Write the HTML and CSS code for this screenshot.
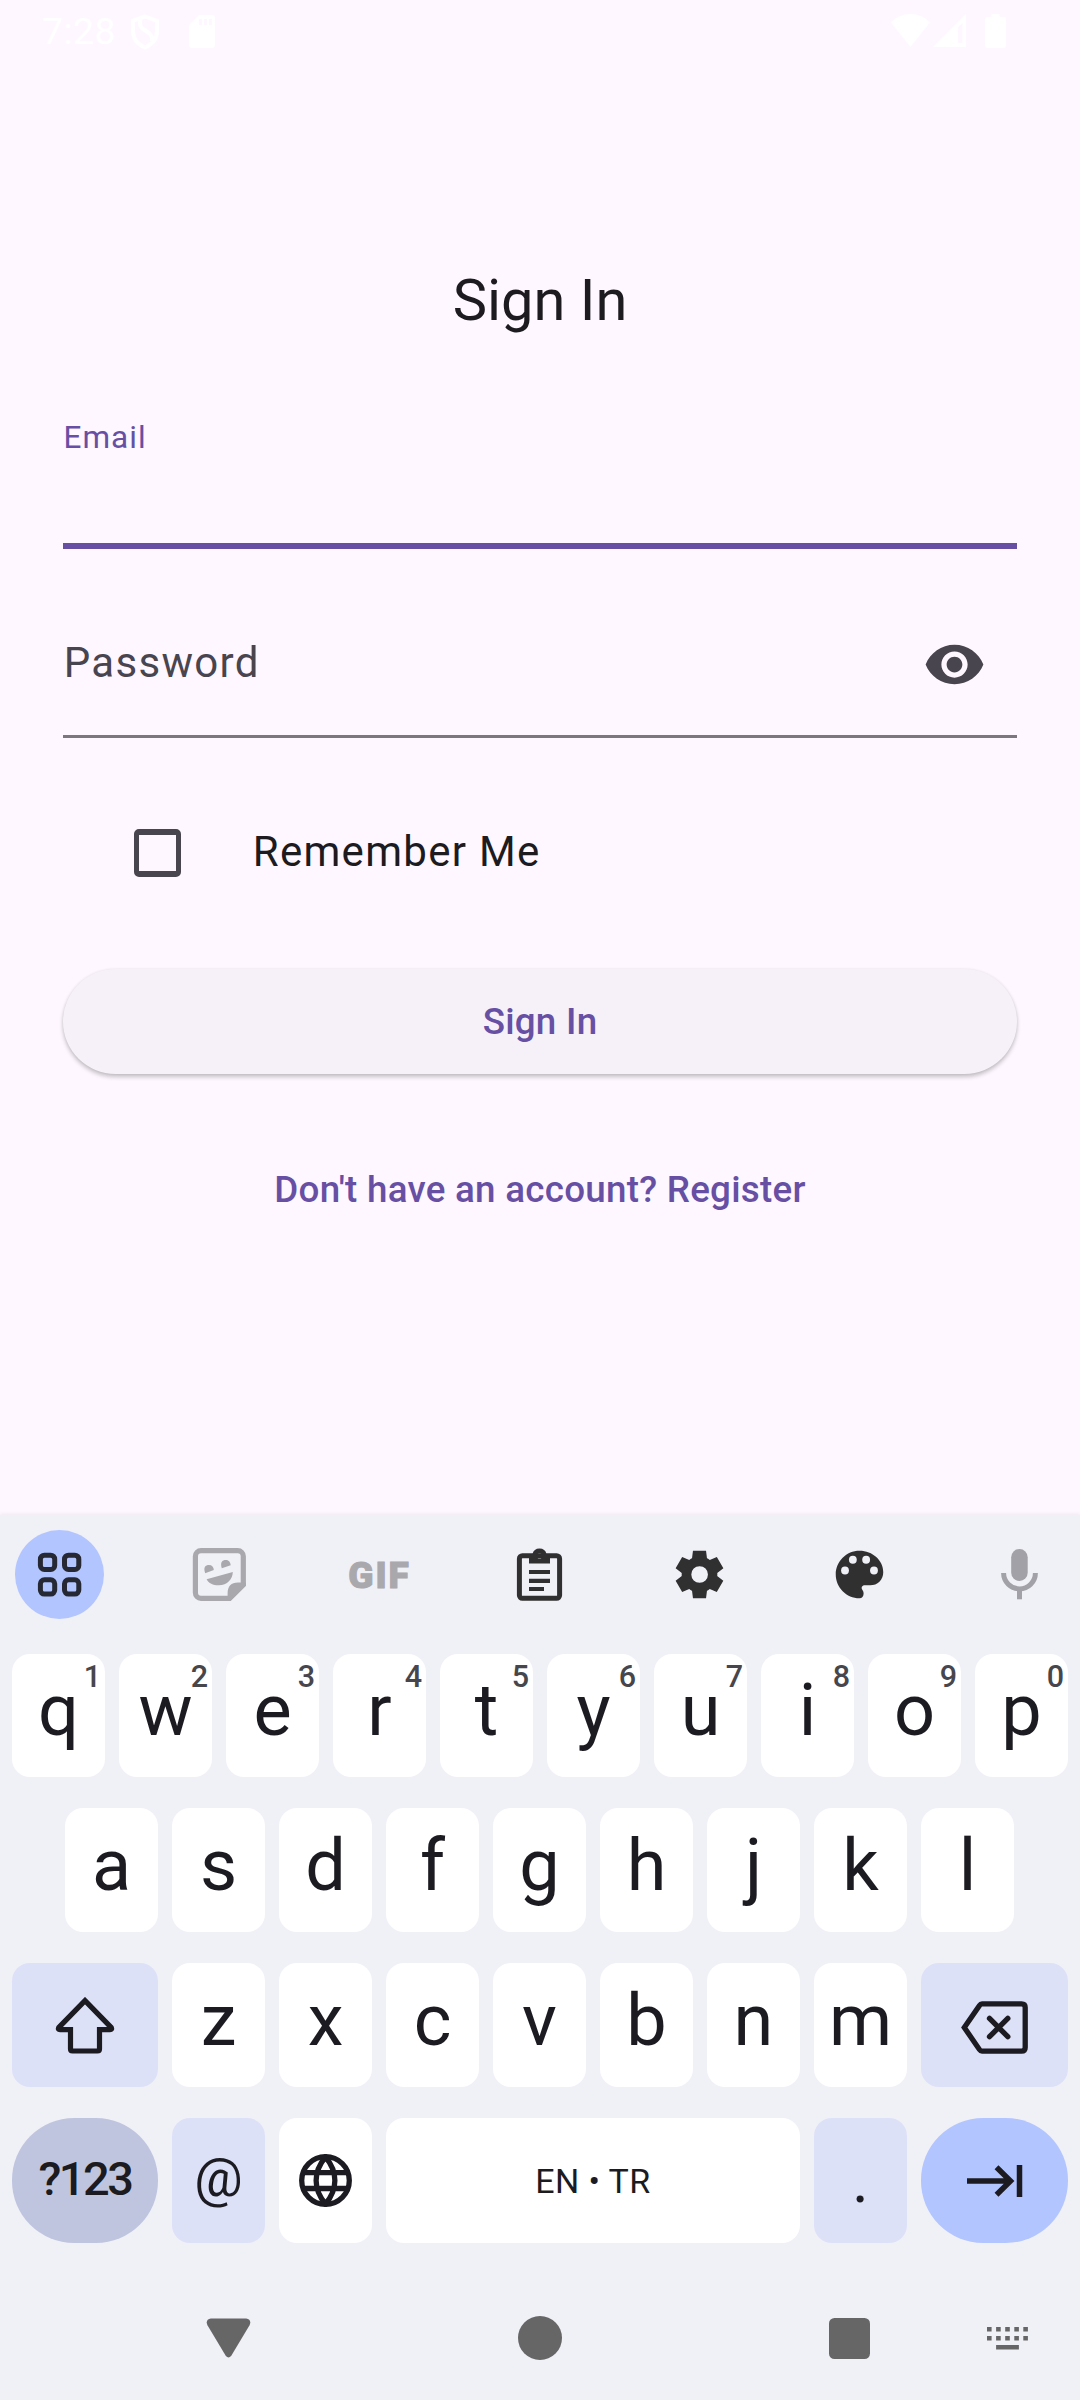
FILE: index.html
```html
<!DOCTYPE html>
<html lang="en">
<head>
<meta charset="utf-8">
<title>Sign In</title>
<link rel="stylesheet" href="styles.css">
</head>
<body>
<div class="screen">
  <header class="status">
    <span class="clock">7:28</span>
    <svg class="shield" width="30" height="36" viewBox="0 0 30 36"><path d="M15 2.500 27 7v10c0 8-5 13.500-12 16.500C8 30.500 3 25 3 17V7z"/><path d="M10 5v5c0 7 12 7 12 14v3"/></svg>
    <svg class="sd" width="26" height="33" viewBox="0 0 26 33"><path fill-rule="evenodd" d="M10 0h13a3 3 0 0 1 3 3v27a3 3 0 0 1-3 3H3a3 3 0 0 1-3-3V10zM10 4v6h3V4zM15 4v6h3V4zM20 4v6h3V4z"/></svg>
    <span class="spacer"></span>
    <svg class="wifi" width="39" height="33" viewBox="0 0 39 33"><path d="M0 8.500Q8 0 19.500 0T39 8.500L19.500 33z"/></svg>
    <svg class="signal" width="33" height="33" viewBox="0 0 33 33"><path fill-rule="evenodd" d="M33 0v33H0zM29.500 9 25 13.500V29h4.500z"/></svg>
    <svg class="battery" width="21" height="34" viewBox="0 0 21 34"><path d="M6.500 0h8v3H19a2 2 0 0 1 2 2v27a2 2 0 0 1-2 2H2a2 2 0 0 1-2-2V5a2 2 0 0 1 2-2h4.500z"/></svg>
  </header>

  <main class="form">
    <h1 class="title">Sign In</h1>
    <div class="field field-active"><label class="label-small">Email</label></div>
    <div class="field field-idle">
      <label class="label">Password</label>
      <svg class="eye" width="63" height="63" viewBox="0 0 24 24"><path d="M12 4.500C7 4.500 2.730 7.610 1 12c1.730 4.390 6 7.500 11 7.500s9.270-3.110 11-7.500c-1.730-4.390-6-7.500-11-7.500zM12 17c-2.760 0-5-2.240-5-5s2.240-5 5-5 5 2.240 5 5-2.240 5-5 5zm0-8c-1.660 0-3 1.340-3 3s1.340 3 3 3 3-1.340 3-3-1.340-3-3-3z"/></svg>
    </div>
    <div class="remember"><span class="checkbox"></span><span class="remember-text">Remember Me</span></div>
    <div class="button">Sign In</div>
    <div class="link">Don't have an account? Register</div>
  </main>

  <section class="keyboard">
    <div class="toolbar">
      <div class="tool tool-on"><svg width="89" height="89" viewBox="0 0 89 89" fill="none" stroke="#262833" stroke-width="5"><rect x="25.400" y="25.200" width="14.300" height="14.300" rx="4"/><rect x="49.500" y="25.200" width="14.300" height="14.300" rx="4"/><rect x="25.400" y="49.800" width="14.300" height="14.300" rx="4"/><rect x="49.500" y="49.800" width="14.300" height="14.300" rx="4"/></svg></div>
      <div class="tool"><svg width="89" height="89" viewBox="0 0 89 89" fill="#a9a8ad"><path fill="none" stroke="#a9a8ad" stroke-width="5.200" d="M54.500 68.400H26a5.600 5.600 0 0 1-5.600-5.600V26.200a5.600 5.600 0 0 1 5.600-5.600h36.700a5.600 5.600 0 0 1 5.600 5.600v28.500z"/><path d="M52.600 69V63.500Q52.600 52.600 63 52.600h7.900v3.100L55.500 71h-3z"/><path d="M30.200 43.200C28 37 30.500 35 34 35c3 0 4.800 2 4.800 5.100zM46.800 38.300C45 32.500 47 30 51 30c3 0 4.500 2.500 4.700 5.300zM31.600 49.300 57.800 42c0 7-5.500 13.300-14 13.300-6 0-10-2-12.200-6z"/></svg></div>
      <div class="tool gif">GIF</div>
      <div class="tool"><svg width="89" height="89" viewBox="0 0 89 89" fill="#303030"><rect x="24.400" y="25.700" width="40.200" height="42.600" rx="3" fill="none" stroke="#303030" stroke-width="5"/><path fill-rule="evenodd" d="M34 33.500V24h3.500a7.200 7.200 0 0 1 14 0H55v9.500zM44.500 23.300a2.600 2.600 0 1 0 .01 5.200 2.600 2.600 0 0 0 0-5.200z"/><path d="M34 40h21v4H34zM34 48.700h21V53H34zM34 57h15v4H34z"/></svg></div>
      <div class="tool"><svg width="57" height="57" viewBox="0 0 24 24" fill="#303030"><path d="M9.250 22l-.4-3.200q-.325-.125-.612-.3-.288-.175-.563-.375L4.700 19.375l-2.750-4.750 2.575-1.950Q4.500 12.500 4.500 12.337v-.675q0-.162.025-.337L1.950 9.375l2.750-4.750 2.975 1.250q.275-.2.575-.375.3-.175.6-.3l.4-3.200h5.500l.4 3.200q.325.125.613.3.287.175.562.375l2.975-1.250 2.750 4.750-2.575 1.950q.025.175.025.337v.675q0 .163-.05.338l2.575 1.950-2.750 4.750-2.950-1.250q-.275.2-.575.375-.3.175-.6.3l-.4 3.200zm2.800-6.500q1.450 0 2.475-1.025Q15.550 13.450 15.550 12q0-1.450-1.025-2.475Q13.500 8.500 12.050 8.500q-1.475 0-2.488 1.025Q8.550 10.550 8.550 12q0 1.450 1.012 2.475Q10.575 15.500 12.050 15.500z"/></svg></div>
      <div class="tool"><svg width="57" height="57" viewBox="0 0 24 24"><path fill="#303030" d="M12 22C6.490 22 2 17.510 2 12S6.490 2 12 2s10 4.040 10 9c0 3.310-2.450 5.500-5.500 5.500h-2.270c-1.200 0-1.700 1-1 2 .3.400.5.800.5 1.600 0 1.100-.7 1.900-1.730 1.900z"/><g fill="#f0f0f7"><circle cx="5.900" cy="10.300" r="1.650"/><circle cx="9.200" cy="5.800" r="1.650"/><circle cx="14.800" cy="5.800" r="1.650"/><circle cx="18.100" cy="10.300" r="1.650"/></g></svg></div>
      <div class="tool"><svg width="89" height="89" viewBox="0 0 89 89" fill="#a1a1a7"><rect x="36.200" y="19" width="16.500" height="32" rx="8.200"/><path fill="none" stroke="#a1a1a7" stroke-width="5" d="M28.600 43a15.900 15.900 0 0 0 31.800 0"/><path d="M42 60h5v9.300h-5z"/></svg></div>
    </div>

    <div class="keys">
      <div class="row row-top">
        <div class="key">q<sup class="hint">1</sup></div><div class="key">w<sup class="hint">2</sup></div><div class="key">e<sup class="hint">3</sup></div><div class="key">r<sup class="hint">4</sup></div><div class="key">t<sup class="hint">5</sup></div><div class="key">y<sup class="hint">6</sup></div><div class="key">u<sup class="hint">7</sup></div><div class="key">i<sup class="hint">8</sup></div><div class="key">o<sup class="hint">9</sup></div><div class="key">p<sup class="hint">0</sup></div>
      </div>
      <div class="row row-home">
        <div class="key">a</div><div class="key">s</div><div class="key">d</div><div class="key">f</div><div class="key">g</div><div class="key">h</div><div class="key">j</div><div class="key">k</div><div class="key">l</div>
      </div>
      <div class="row">
        <div class="key key-wide tint shift"><svg width="60" height="57" viewBox="0 0 60 57" fill="none" stroke="#1b1b21" stroke-width="5.200"><path d="M30 3.600 56.300 30.600Q57.300 32.700 55 32.700H44.500V52q0 2-2 2h-25q-2 0-2-2V32.700H5Q2.700 32.700 3.700 30.600z"/></svg></div>
        <div class="key">z</div><div class="key">x</div><div class="key">c</div><div class="key">v</div><div class="key">b</div><div class="key">n</div><div class="key">m</div>
        <div class="key key-wide tint erase"><svg width="67" height="53" viewBox="0 0 67 53" fill="none" stroke="#1b1b21" stroke-width="5.300"><path d="M21 2.900h39.500q3.700 0 3.700 3.700v39.800q0 3.700-3.700 3.700H21q-1.500 0-2.500-1.500L3.300 26.500 18.500 4.400Q19.500 2.900 21 2.900z"/><path stroke-linecap="round" d="M28.500 17.400 46.800 35.700M46.800 17.400 28.500 35.700"/></svg></div>
      </div>
      <div class="row row-bottom">
        <div class="key key-wide symbols">?123</div>
        <div class="key tint at">@</div>
        <div class="key icon-key"><svg width="53" height="53" viewBox="0 0 53 53" fill="none" stroke="#1b1b21" stroke-width="5.300"><circle cx="26.500" cy="26.500" r="23.800"/><path d="M4 18.700h45M4 34.500h45M26.500 3C14 18 14 35 26.500 50 39 35 39 18 26.500 3z"/></svg></div>
        <div class="key space">EN • TR</div>
        <div class="key tint dot">.</div>
        <div class="key key-wide enter"><svg width="56" height="32" viewBox="0 0 56 32" fill="none" stroke="#1b1b21" stroke-width="5.500"><path d="M0 16h44M29.500 2.200 43.500 16 29.500 29.800M52.500 0v32"/></svg></div>
      </div>
    </div>

    <nav class="nav">
      <svg width="45" height="42" viewBox="0 0 46 42"><path d="M5 1h36q6 1 3.500 7L26 39q-3 4-6 0L1.500 8Q-1 2 5 1z"/></svg>
      <svg width="44" height="44" viewBox="0 0 44 44"><circle cx="22" cy="22" r="22"/></svg>
      <svg width="41" height="41" viewBox="0 0 41 41"><rect width="41" height="41" rx="5.500"/></svg>
      <svg class="ime" width="41" height="23" viewBox="0 0 41 23"><path d="M0 0h4.600v4.600H0zM9.100 0h4.600v4.600H9.100zM18.200 0h4.600v4.600h-4.600zM27.300 0h4.600v4.600h-4.600zM36.300 0h4.600v4.600h-4.600zM0 9h4.600v4.600H0zM9.100 9h4.600v4.600H9.100zM18.200 9h4.600v4.600h-4.600zM27.300 9h4.600v4.600h-4.600zM36.300 9h4.600v4.600h-4.600zM9.100 18h22.800v4.600H9.100z"/></svg>
    </nav>
  </section>
</div>
</body>
</html>
```
FILE: styles.css
```css
* { box-sizing: border-box; }
body { margin: 0; font-family: Roboto, sans-serif; }
svg { display: block; flex: none; }

.screen {
  display: flex;
  flex-direction: column;
  width: 1080px;
  height: 2400px;
  background: #fef7ff;
  color: #1d1b20;
}

/* Status bar */
.status {
  display: flex;
  align-items: flex-start;
  height: 63px;
  padding: 14px 74px 0 42px;
  color: #fff;
  fill: #fff;
}
.clock { width: 88px; font-size: 37.500px; line-height: 34px; letter-spacing: .4px; }
.shield { fill: none; stroke: #fff; stroke-width: 4; }
.sd { margin: 1px 0 0 29px; }
.spacer { flex: 1; }
.signal { margin-left: 3px; }
.battery { margin-left: 19px; }

/* Form */
.form {
  display: flex;
  flex-direction: column;
  height: 1452px;
  padding: 200px 63px 0;
}
.title {
  margin: 0;
  font-size: 57.75px;
  font-weight: 400;
  line-height: 74px;
  text-align: center;
}
.field { display: flex; }
.field-active {
  height: 133px;
  margin-top: 79px;
  padding: 1px 0 0 .6px;
  border-bottom: 6px solid #6750a4;
}
.label-small {
  color: #6750a4;
  font-size: 31.5px;
  line-height: 42px;
  letter-spacing: 1px;
}
.field-idle {
  align-items: center;
  justify-content: space-between;
  height: 147px;
  margin-top: 42px;
  padding: 0 31px 0 .7px;
  border-bottom: 3px solid #7c767f;
}
.label {
  color: #49454f;
  font-size: 42px;
  line-height: 50px;
  letter-spacing: 1.3125px;
}
.eye { margin-top: 2px; fill: #49454f; }
.remember {
  display: flex;
  align-items: center;
  height: 126px;
  margin-top: 52px;
  padding-left: 71px;
}
.checkbox {
  width: 47px;
  height: 48px;
  border: 6px solid #49454f;
  border-width: 6px 5px;
  border-radius: 5px;
}
.remember-text {
  margin: -2px 0 0 71.7px;
  font-size: 42px;
  line-height: 50px;
  letter-spacing: 1.3125px;
}
.button {
  height: 105px;
  margin-top: 53px;
  border-radius: 53px;
  background: #f6f1f9;
  box-shadow: 0 3px 4px rgba(0, 0, 0, .22), 0 0 3px rgba(0, 0, 0, .07);
  color: #6750a4;
  font-size: 36.75px;
  font-weight: 500;
  line-height: 105px;
  letter-spacing: .2625px;
  text-align: center;
}
.link {
  margin-top: 91px;
  color: #6750a4;
  font-size: 36.75px;
  font-weight: 500;
  line-height: 50px;
  letter-spacing: .2625px;
  text-align: center;
}

/* Keyboard */
.keyboard {
  display: flex;
  flex-direction: column;
  height: 885px;
  background: #f0f0f7;
  box-shadow: 0 -1px 3px rgba(80, 60, 90, .08);
}
.toolbar {
  display: flex;
  justify-content: space-between;
  height: 139px;
  padding: 15px 16px 0 15px;
}
.tool {
  display: flex;
  align-items: center;
  justify-content: center;
  width: 89px;
  height: 89px;
}
.tool-on { border-radius: 50%; background: #b2c5ff; }
.gif {
  padding-top: 2px;
  color: #a9a8ad;
  font-size: 37px;
  font-weight: 900;
  letter-spacing: 2px;
  -webkit-text-stroke: 1px #a9a8ad;
}
.keys {
  display: flex;
  flex-direction: column;
  gap: 31px;
  padding: 0 12px;
}
.row { display: flex; gap: 14px; height: 124px; }
.row-top { height: 123px; }
.row-home { padding-left: 53px; }
.row-bottom { height: 125px; }
.key {
  position: relative;
  display: flex;
  align-items: center;
  justify-content: center;
  width: 93px;
  padding-bottom: 9px;
  border-radius: 18px;
  background: #fff;
  color: #1b1b21;
  font-size: 72px;
  line-height: 84px;
}
.hint {
  position: absolute;
  top: 5px;
  right: 4px;
  color: #46464c;
  font-size: 30.500px;
  font-weight: 500;
  line-height: 36px;
  vertical-align: baseline;
}
.key-wide { width: 146px; }
.key-wide:last-child { width: 147px; }
.tint { background: #dde1f8; }
.shift, .erase, .icon-key, .enter { padding-bottom: 0; }
.erase { padding-top: 5px; }
.symbols {
  padding-bottom: 3px;
  border-radius: 62px;
  background: #c0c5df;
  font-size: 47px;
  font-weight: 500;
  letter-spacing: -2.500px;
}
.at { padding-bottom: 5px; font-size: 54px; }
.space { width: 414px; padding-bottom: 0; font-size: 34px; letter-spacing: .4px; }
.dot { padding-bottom: 0; font-size: 64px; }
.enter { border-radius: 62px; background: #b2c5ff; }

/* Navigation bar */
.nav {
  display: flex;
  align-items: center;
  height: 44px;
  margin-top: 73px;
  padding-left: 206px;
  fill: #666;
}
.nav svg:nth-child(2) { margin-left: 267px; }
.nav svg:nth-child(3) { margin-left: 267px; }
.nav .ime { margin-left: 117px; }
```
